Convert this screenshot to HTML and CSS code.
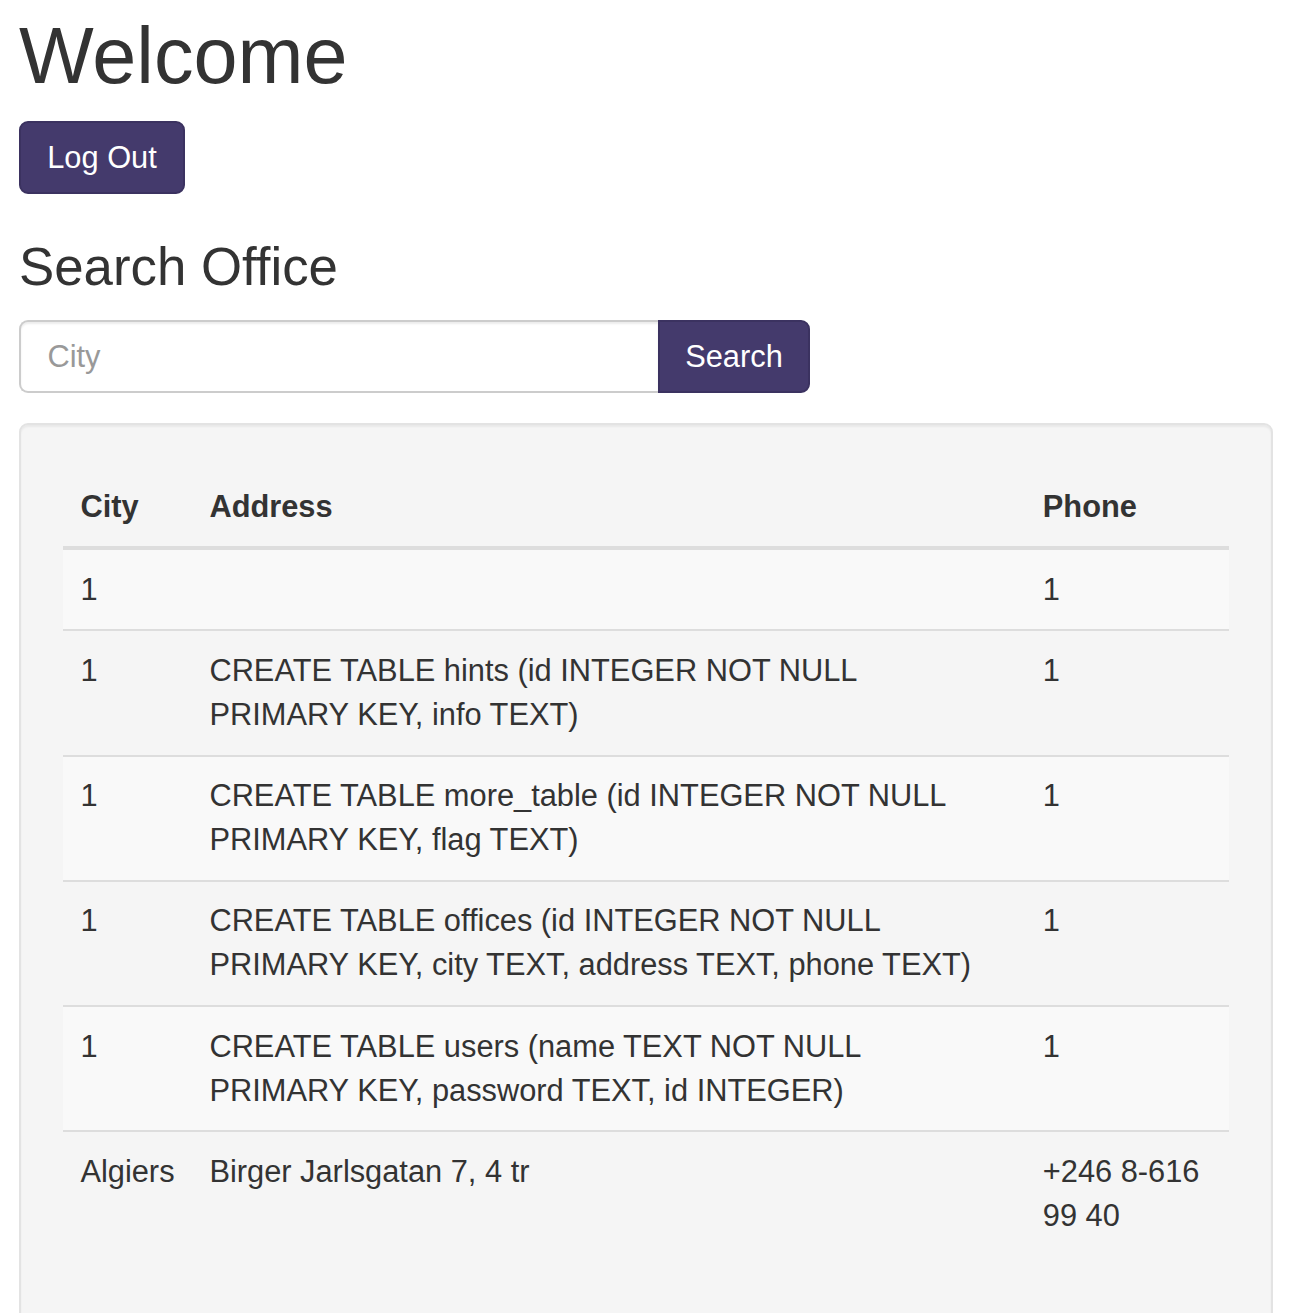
FILE: index.html
```html
<!DOCTYPE html>
<html>
<head>
<meta charset="utf-8">
<title>Welcome</title>
<link rel="stylesheet" href="styles.css">
</head>
<body>
<div class="page">
  <h1 class="title">Welcome</h1>
  <button class="btn btn-logout" type="button">Log Out</button>
  <h3 class="subtitle">Search Office</h3>
  <form class="search-form">
    <input class="search-input" type="text" placeholder="City">
    <button class="btn btn-search" type="button">Search</button>
  </form>
  <div class="well">
    <table class="results">
      <colgroup>
        <col class="col-city">
        <col class="col-address">
        <col class="col-phone">
      </colgroup>
      <thead>
        <tr><th>City</th><th>Address</th><th>Phone</th></tr>
      </thead>
      <tbody>
        <tr><td>1</td><td class="addr"></td><td>1</td></tr>
        <tr><td>1</td><td class="addr">CREATE TABLE hints (id INTEGER NOT NULL PRIMARY KEY, info TEXT)</td><td>1</td></tr>
        <tr><td>1</td><td class="addr">CREATE TABLE more_table (id INTEGER NOT NULL PRIMARY KEY, flag TEXT)</td><td>1</td></tr>
        <tr><td>1</td><td class="addr">CREATE TABLE offices (id INTEGER NOT NULL PRIMARY KEY, city TEXT, address TEXT, phone TEXT)</td><td>1</td></tr>
        <tr><td>1</td><td class="addr">CREATE TABLE users (name TEXT NOT NULL PRIMARY KEY, password TEXT, id INTEGER)</td><td>1</td></tr>
        <tr><td>Algiers</td><td class="addr">Birger Jarlsgatan 7, 4 tr</td><td>+246 8-616 99 40</td></tr>
      </tbody>
    </table>
  </div>
</div>
</body>
</html>
```
FILE: styles.css
```css
* { box-sizing: border-box; }
html, body { margin: 0; padding: 0; background: #fff; }
body {
  font-family: "Liberation Sans", Arial, Helvetica, sans-serif;
  font-size: 30.8px;
  line-height: 44px;
  color: #333;
}
.page {
  width: 1273px;
  padding-left: 19px;
}
.title {
  font-size: 79.2px;
  font-weight: 500;
  line-height: 1.1;
  margin: 12px 0 22px;
}
.subtitle {
  font-size: 52.8px;
  font-weight: 500;
  line-height: 1.1;
  margin: 44px 0 24px;
}
.btn {
  font-family: inherit;
  font-size: 30.8px;
  line-height: 44px;
  color: #fff;
  background: #443a6c;
  border: 2px solid #3b3260;
  border-radius: 9px;
  padding: 0 26.4px;
  height: 73px;
  cursor: pointer;
  display: inline-block;
}
.btn-logout { display: block; width: 166px; padding: 0; }
.search-form {
  display: flex;
  margin: 0 0 30px;
  width: 792px;
}
.search-input {
  flex: 0 0 639px;
  height: 73px;
  font-family: inherit;
  font-size: 30.8px;
  color: #555;
  padding: 0 26.4px;
  border: 2px solid #ccc;
  border-right: none;
  border-radius: 9px 0 0 9px;
  box-shadow: inset 0 2px 2px rgba(0,0,0,.075);
  outline: none;
}
.search-input::placeholder { color: #999; }
.btn-search {
  flex: 0 0 152px;
  padding: 0;
  border-radius: 0 9px 9px 0;
}
.well {
  background: #f5f5f5;
  border: 2px solid #e3e3e3;
  border-radius: 9px;
  box-shadow: inset 0 2px 2px rgba(0,0,0,.05);
  padding: 41.8px;
  min-height: 950px;
}
.results {
  width: 100%;
  border-collapse: collapse;
  border-spacing: 0;
  table-layout: fixed;
}
.col-city { width: 129px; }
.col-phone { width: 204px; }
.results th, .results td {
  padding: 17.6px;
  text-align: left;
  vertical-align: top;
  line-height: 44px;
}
.results td.addr { padding-right: 32px; }
.results th {
  font-weight: bold;
  vertical-align: bottom;
  border-bottom: 4px solid #ddd;
}
.results td { border-top: 2px solid #ddd; }
.results tbody tr:first-child td { border-top: none; }
.results tbody tr:nth-child(odd) { background: #f9f9f9; }
```
